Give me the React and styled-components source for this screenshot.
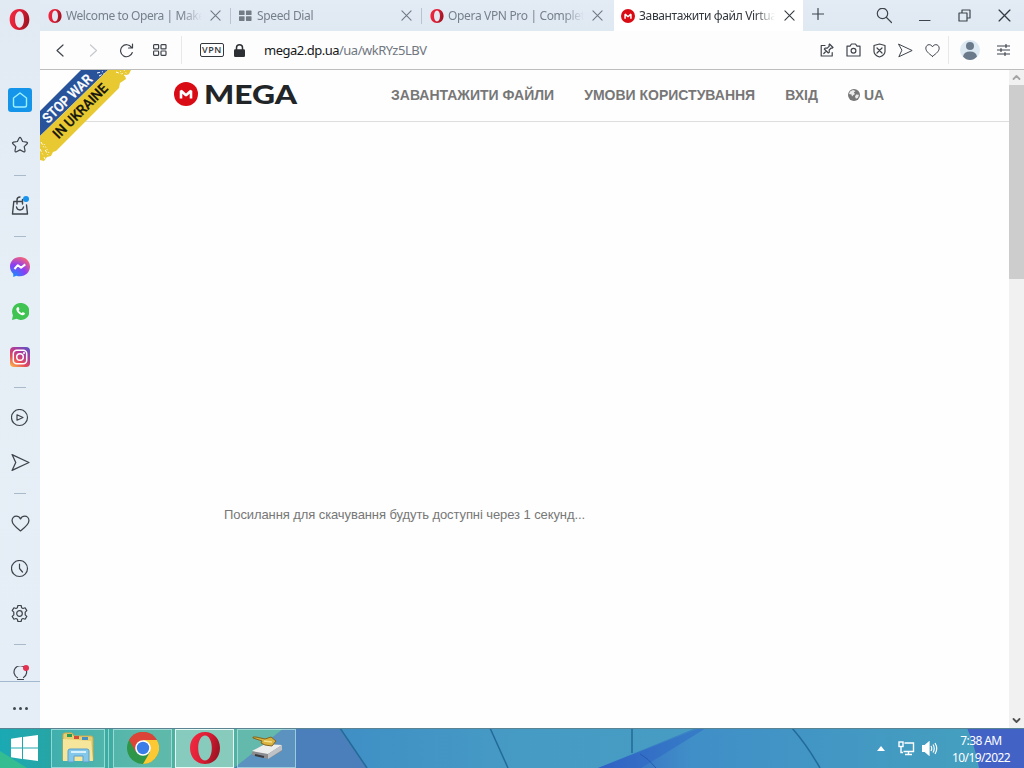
import styled, { createGlobalStyle, css } from "styled-components";

const GlobalStyle = createGlobalStyle`
  *{
    box-sizing: border-box;
  }
  body{
    margin: 0;
    width: 1024px;
    height: 768px;
    overflow: hidden;
    background: #fefefe;
    font-family: "Noto Sans", "Open Sans", sans-serif;
  }
  svg{
    display: block;
    flex: none;
  }
`;

const Line = ({ w = 16, h, box, sw = 1.2, color = "#3f444b", children }) => (
  <svg
    width={w}
    height={h || w}
    viewBox={box || `0 0 ${w} ${h || w}`}
    fill="none"
    stroke={color}
    strokeWidth={sw}
    strokeLinecap="round"
    strokeLinejoin="round"
  >
    {children}
  </svg>
);

const OperaLogo = ({ size, id }) => (
  <svg width={size} height={size} viewBox="0 0 32 32">
    <defs>
      <linearGradient id={id} x1="0" y1="0" x2="1" y2=".3">
        <stop offset="0" stopColor="#f22c42" />
        <stop offset=".6" stopColor="#dc1c34" />
        <stop offset="1" stopColor="#a31524" />
      </linearGradient>
    </defs>
    <path
      fill={`url(#${id})`}
      fillRule="evenodd"
      d="M16 0C7 0 1 7 1 16s6 16 15 16 15-7 15-16S25 0 16 0Zm0 3.500c4 0 6.800 5.500 6.800 12.500S20 28.500 16 28.500 9.200 23 9.200 16 12 3.500 16 3.500Z"
    />
  </svg>
);

const MegaMark = ({ size }) => (
  <svg width={size} height={size} viewBox="0 0 24 24">
    <circle cx="12" cy="12" r="12" fill="#d90b14" />
    <path d="M7 16.500V8.800L12 13.200l5-4.400v7.700" fill="none" stroke="#fff" strokeWidth="2.600" strokeLinejoin="bevel" />
  </svg>
);

const Cross = ({ w = 10, color = "#6f7a86" }) => (
  <Line w={w} color={color} box="0 0 12 12"><path d="M1 1l10 10M11 1L1 11" /></Line>
);

const Send = ({ w }) => (
  <Line w={w} box="0 0 18 18"><path d="M1 1.500L17 9 1 16.500 4.500 9z" /></Line>
);

const Heart = ({ w }) => (
  <Line w={w} box="0 0 18 18"><path d="M9 16C4 12.300 1 9.700 1 6.200 1 3.700 2.800 2 5 2c1.700 0 3.200 1 4 2.600C9.800 3 11.300 2 13 2c2.200 0 4 1.700 4 4.200 0 3.500-3 6.100-8 9.800z" /></Line>
);

const SpeedDialIcon = () => (
  <svg width="13" height="12" viewBox="0 0 14 12" fill="#737b84">
    <rect width="6" height="5" rx=".6" /><rect x="7.500" width="6" height="5" rx=".6" />
    <rect y="6.300" width="6" height="5" rx=".6" /><rect x="7.500" y="6.300" width="6" height="5" rx=".6" />
  </svg>
);

const Messenger = () => (
  <svg width="20" height="20" viewBox="0 0 20 20">
    <defs>
      <radialGradient id="msg" cx=".2" cy="1" r="1.100">
        <stop offset="0" stopColor="#1292ff" />
        <stop offset=".55" stopColor="#8a3df5" />
        <stop offset="1" stopColor="#fb6474" />
      </radialGradient>
    </defs>
    <path fill="url(#msg)" d="M10 0C4.300 0 0 4.100 0 9.600c0 3 1.200 5.400 3.200 7.200l.1 3.200 3-1.300c1.100.4 2.400.6 3.700.6 5.700 0 10-4.200 10-9.700S15.700 0 10 0z" />
    <path fill="none" stroke="#fff" strokeWidth="2" strokeLinejoin="round" d="M4.500 12l3.300-3.800 3.300 2.600L15.300 7.400" />
  </svg>
);

const WhatsApp = () => (
  <svg width="17" height="17" viewBox="0 0 18 18">
    <path fill="#3fc351" d="M9 0a9 9 0 0 0-8 13L0 18l5-1.200A9 9 0 1 0 9 0z" />
    <path fill="#fff" d="M5.800 4.500c.5-.4 1-.3 1.300.2l.8 1.700c0 .5-.5.900-.8 1.300.6 1.300 1.700 2.400 3.100 3 .5-.4.900-1.200 1.500-1l1.800.9c.4.300.1 1.300-.3 1.700-.8.800-2 1-3.200.5C7 11.700 5.100 9.600 4.600 7c-.2-1 .4-2 1.200-2.500z" />
  </svg>
);

const Instagram = () => (
  <svg width="20" height="20" viewBox="0 0 20 20">
    <defs>
      <linearGradient id="ig" x1=".1" y1="1" x2=".8" y2="0">
        <stop offset="0" stopColor="#fdb44b" />
        <stop offset=".35" stopColor="#e54a58" />
        <stop offset=".65" stopColor="#b53a95" />
        <stop offset="1" stopColor="#6550c0" />
      </linearGradient>
    </defs>
    <rect width="20" height="20" rx="4" fill="url(#ig)" />
    <g fill="none" stroke="#fff" strokeWidth="1.500">
      <rect x="3.300" y="3.300" width="13.400" height="13.400" rx="3.500" />
      <circle cx="10" cy="10" r="3.300" />
    </g>
    <circle cx="14" cy="6" r="1" fill="#fff" />
  </svg>
);

const sidebar = [
  { id: "home", icon: <Line w={16} color="#9df0ff" sw={1.400}><path d="M1.500 6L8 1l6.500 5v7.200q0 1.800-1.800 1.800H3.300q-1.800 0-1.800-1.800z" /></Line>, active: true },
  { id: "star", icon: <Line w={18}><path d="M8 2.200q1-1.700 2 0l1.600 3.300 3.900.6q1.700.4.600 1.700l-2.900 2.800.8 4q.1 1.700-1.500 1.100L9 13.900l-3.500 1.800q-1.600.6-1.500-1.100l.8-4L1.900 7.800Q.8 6.500 2.500 6.100l3.900-.6z" /></Line> },
  { id: "d1" },
  { id: "bag", icon: <Line w={18} h={19} sw={1.400}><path d="M10.500 5.500H2.800L1.500 18h15L15.500 9M6 8V4q0-3 3-3M11.500 3.500V8M5.500 11q.5 3 3.500 3t3.500-3" /></Line>, dot: "#1693ee" },
  { id: "d2" },
  { id: "messenger", icon: <Messenger /> },
  { id: "whatsapp", icon: <WhatsApp /> },
  { id: "instagram", icon: <Instagram /> },
  { id: "d3" },
  { id: "player", icon: <Line w={18}><circle cx="8.500" cy="8.500" r="8" /><path d="M6 5.800l6 2.700-6 2.700z" /></Line> },
  { id: "flow", icon: <Send w={19} /> },
  { id: "d4" },
  { id: "heart", icon: <Heart w={19} /> },
  { id: "history", icon: <Line w={18}><circle cx="8.500" cy="8.500" r="8" /><path d="M8.500 4v4.500l3 3.500" /></Line> },
  { id: "settings", icon: <Line w={18} box=".5 .5 18 18"><circle cx="9" cy="9" r="2.800" /><path d="M7.400 1h3.200l.5 2.200 1.400.8 2.100-.7 1.700 2.800-1.600 1.500v2.800l1.600 1.500-1.700 2.800-2.100-.7-1.400.8-.5 2.200H7.400l-.5-2.200-1.400-.8-2.100.7-1.700-2.800 1.600-1.500V7.600L1.700 6.100l1.700-2.800 2.100.7 1.400-.8z" /></Line> },
  { id: "d5" },
  { id: "tips", icon: <Line w={16} h={18} box="0 1 16 18"><path d="M5.500 12.700A6.300 6.300 0 1 1 11.500 12.500M5.500 14.500h6M7 16.500h3.500" /></Line>, dot: "#e5304f" },
];

const tabs = [
  { title: "Welcome to Opera | Make", icon: <OperaLogo size={14} id="o1" />, ls: "-.42px" },
  { title: "Speed Dial", icon: <SpeedDialIcon />, ls: "-.35px" },
  { title: "Opera VPN Pro | Complete", icon: <OperaLogo size={14} id="o2" />, ls: "-.34px" },
  { title: "Завантажити файл Virtual", icon: <MegaMark size={14} />, ls: "-.36px", active: true },
];

const Wallpaper = () => (
  <svg width="1024" height="40" viewBox="0 0 1024 40" preserveAspectRatio="none">
    <defs>
      <linearGradient id="sky">
        <stop offset="0" stopColor="#1aa9b4" />
        <stop offset=".05" stopColor="#27a5a5" />
        <stop offset=".14" stopColor="#4bb1a1" />
        <stop offset=".24" stopColor="#53b1a3" />
      </linearGradient>
      <linearGradient id="mid">
        <stop offset="0" stopColor="#3f8fc5" />
        <stop offset=".5" stopColor="#469bc4" />
        <stop offset="1" stopColor="#479cc4" />
      </linearGradient>
      <linearGradient id="right">
        <stop offset="0" stopColor="#3566c4" />
        <stop offset=".22" stopColor="#408fc8" />
        <stop offset="1" stopColor="#45a2bd" />
      </linearGradient>
    </defs>
    <rect width="1024" height="40" fill="url(#sky)" />
    <path d="M0 23l27 17H0z" fill="#35bd92" />
    <path d="M284 0h60l25 40H234z" fill="#4a7fbb" />
    <path d="M340 0h360l-98 40H367z" fill="url(#mid)" />
    <path d="M598 40L700 0h324v40z" fill="url(#right)" />
    <path d="M598 40L696 0h10q-35 22-65 40z" fill="#285dc5" opacity=".4" />
    <path d="M967 0q8 18 12 40h45V0z" fill="#4262c6" />
    <g fill="none" stroke="#236a98" strokeWidth="1.500">
      <path d="M340 0l27 40M490 0l18 40M632 0v25M792 0q15 17 28 40" />
      <path d="M640 26q8 4 16 14" stroke="#265bb0" strokeWidth="1" />
    </g>
    <path d="M0 .5h1024" stroke="#5b8391" />
  </svg>
);

const ExplorerIcon = () => (
  <svg width="34" height="32" viewBox="0 0 34 32">
    <path d="M2 3q0-2 2-2h7l2 3h17q2 0 2 2v22H2z" fill="#e9cf71" stroke="#c9a94b" />
    <path d="M6 2h5v3H6z" fill="#2a9b54" /><path d="M13 4h5v3h-5z" fill="#d24d38" /><path d="M21 5h6v3h-6z" fill="#478ec2" />
    <path d="M2 7l28 2 2 20H2z" fill="#f6e69b" />
    <path d="M7 30V19q0-2 2-2h17q2 0 2 2v11h-6v-6h-9v6z" fill="#83c8eb" stroke="#5a9fcb" />
    <path d="M10 20h15" stroke="#d7f1fc" strokeWidth="2" />
  </svg>
);

const ChromeIcon = () => (
  <svg width="32" height="32" viewBox="0 0 32 32">
    <circle cx="16" cy="16" r="16" fill="#2d9648" />
    <path d="M16 16L2.100 8A16 16 0 0 1 29.900 8z" fill="#dc4437" />
    <path d="M16 8h13.900A16 16 0 0 1 16 32l7-12z" fill="#fcc934" />
    <path d="M2.100 8L9 20l7-12z" fill="#dc4437" />
    <circle cx="16" cy="16" r="7.800" fill="#fff" />
    <circle cx="16" cy="16" r="6.200" fill="#3a7de8" />
  </svg>
);

const DriveIcon = () => (
  <svg width="32" height="26" viewBox="0 0 32 26">
    <path d="M1 17l12-8 18 1v6l-14 8-16-4z" fill="#8a8c90" />
    <path d="M1 16l13-7 17 1-14 9z" fill="#eceeee" />
    <path d="M17 19l14-9v5l-14 9z" fill="#bec2c6" />
    <path d="M2 2h3l9 2 6-2 5 4-4 5-7-1-4-2 1-2-9-3z" fill="#d9b33f" stroke="#86651d" />
    <path d="M13 6l8 1" stroke="#f4df8b" strokeWidth="1.500" />
    <path d="M4 20l9 2" stroke="#383b40" strokeWidth="2" />
  </svg>
);

const Ribbon = () => (
  <svg width="92" height="92" viewBox="0 0 92 92" fontFamily="Roboto, sans-serif" fontWeight="500" fontSize="14">
    <path d="M41 0h27L0 66V41z" fill="#28539b" />
    <path d="M68 0h23l-2 4-4 2 1 3-6 4-1 5L16 81l-3 1-2 4-4 1-3 4-4-1V66z" fill="#e8c932" />
    <g stroke="#fff" strokeWidth="1" strokeDasharray="3 2 1 3">
      <path d="M57 3l9-2M59 6l8-4M76 2l14 5M1 72l7 13M0 79l5 10" />
      <path d="M80 1l8 8M84 0l5 7M4 74l5 9" strokeDasharray="1 2" />
    </g>
    <text transform="translate(8 54) rotate(-44)" textLength="63" lengthAdjust="spacingAndGlyphs" fill="#fff" stroke="#fff" strokeWidth=".3">STOP WAR</text>
    <text transform="translate(18.500 69.500) rotate(-45)" textLength="71" lengthAdjust="spacingAndGlyphs" fill="#15150f" stroke="#15150f" strokeWidth=".3">IN UKRAINE</text>
  </svg>
);

const App = () => {
  return (
    <Desktop>
      <GlobalStyle />
      <Browser>
        <Sidebar>
          <OperaMenu><OperaLogo size={21} id="o0" /></OperaMenu>
          <SideList>
            {sidebar.map(({ id, icon, active, dot }) =>
              icon ? (
                <SideItem key={id}>
                  <SideIcon $active={active}>
                    {icon}
                    {dot && <Dot $color={dot} />}
                  </SideIcon>
                </SideItem>
              ) : (
                <SideDivider key={id} />
              )
            )}
          </SideList>
          <SideMore><i /><i /><i /></SideMore>
        </Sidebar>
        <Main>
          <TabBar>
            {tabs.map(({ title, icon, active, ls }) => (
              <Tab key={title} $active={active}>
                <TabIcon>{icon}</TabIcon>
                <TabTitle $ls={ls}>{title}</TabTitle>
                <Cross w={11} color={active ? "#343a42" : undefined} />
              </Tab>
            ))}
            <NewTab><Line w={12}><path d="M6 .5v11M.5 6h11" /></Line></NewTab>
            <WindowButtons>
              <Line w={16}><circle cx="6.500" cy="5.500" r="5.200" /><path d="M10.500 9.500l5 5" /></Line>
              <Line w={12} h={16}><path d="M0 12.500h11" /></Line>
              <Line w={13}><path d="M1 4h8v8H1zM4 4V1h8v8H9" /></Line>
              <Cross w={13} color="#343a42" />
            </WindowButtons>
          </TabBar>
          <Toolbar>
            <NavButtons>
              <Line w={9} h={13}><path d="M7 1L1 6.500l6 5.500" /></Line>
              <Line w={9} h={13} color="#c6c9cd"><path d="M1.500 1l6 5.500-6 5.500" /></Line>
              <Line w={15}><path d="M13.300 9.500A6 6 0 1 1 12.500 4.300M13.500 1v4h-4" /></Line>
              <Line w={14} h={12}><rect x=".6" y=".6" width="5" height="4.300" rx=".7" /><rect x="8" y=".6" width="5" height="4.300" rx=".7" /><rect x=".6" y="7" width="5" height="4.300" rx=".7" /><rect x="8" y="7" width="5" height="4.300" rx=".7" /></Line>
            </NavButtons>
            <Separator />
            <Vpn>VPN</Vpn>
            <svg width="11" height="13" viewBox="0 0 11 13"><path d="M2.500 6V3.800a3 3 0 0 1 6 0V6" fill="none" stroke="#2c2f33" strokeWidth="1.500" /><rect y="5.300" width="11" height="7.700" rx="1.200" fill="#2c2f33" /></svg>
            <Address>mega2.dp.ua<span>/ua/wkRYz5LBV</span></Address>
            <Actions>
              <Line w={14}><path d="M5 2.500H1.200V13h11V9.500M9.500 1l3.500 3.500-1 .7-.8-.2-2 2 .1 2.300-1 .7-4-4 .8-1 2.200.1 2-2-.3-1zM6.300 8l-2.500 2.500" /></Line>
              <Line w={15} h={14}><path d="M1 3.200h3L5.500 1h4L11 3.200h3V13H1z" /><circle cx="7.500" cy="7.800" r="2.400" /></Line>
              <Line w={13} h={15}><path d="M6.500 1l5.500 1.500v6q0 3.500-5.500 5.500Q1 12 1 8.500v-6zM4 5l5 5M9 5l-5 5" /></Line>
              <Send w={15} />
              <Heart w={15} />
            </Actions>
            <Separator />
            <Avatar>
              <svg width="20" height="20" viewBox="0 0 20 20">
                <circle cx="10" cy="10" r="10" fill="#dce9f2" />
                <circle cx="10" cy="6" r="4" fill="#6a7a8b" />
                <path d="M3 16.500Q4 11.500 10 11.500t7 5Q14 20 10 20t-7-3.500z" fill="#6a7a8b" />
              </svg>
            </Avatar>
            <Line w={13} h={12}><path d="M.5 2h12M.5 6h12M.5 10h12M9 .5v3M4 4.500v3M8 8.500v3" /></Line>
          </Toolbar>
          <Viewport>
            <Page>
              <RibbonLink><Ribbon /></RibbonLink>
              <Header>
                <MegaMark size={24} />
                <svg width="96" height="26" viewBox="0 0 96 26">
                  <text x="0" y="22.500" fontFamily="Lato, sans-serif" fontWeight="900" fontSize="27" textLength="93" lengthAdjust="spacingAndGlyphs" fill="#222527">MEGA</text>
                </svg>
                <Menu>
                  <MenuItem>ЗАВАНТАЖИТИ ФАЙЛИ</MenuItem>
                  <MenuItem>УМОВИ КОРИСТУВАННЯ</MenuItem>
                  <MenuItem>ВХІД</MenuItem>
                  <MenuItem>
                    <svg width="12" height="12" viewBox="0 0 12 12">
                      <circle cx="6" cy="6" r="6" fill="#777" />
                      <path d="M5 1L2 2.500 1 5l2.500.5.500 2L5.500 6 7 5 5.800 3.500 7.500 2zM8 5.500l3 .3-1 3-2 1-1-2z" fill="#fff" opacity=".85" />
                    </svg>
                    UA
                  </MenuItem>
                </Menu>
              </Header>
              <Countdown>Посилання для скачування будуть доступні через 1 секунд...</Countdown>
            </Page>
            <Scrollbar>
              <Line w={9} h={15} box="0 0 9 15" color="#a5a5a5" sw={1.800}><path d="M1.500 9L4.500 6l3 3" /></Line>
              <Thumb />
              <Line w={9} h={15} box="0 0 9 15" color="#505050" sw={1.800}><path d="M1.500 6l3 3 3-3" /></Line>
            </Scrollbar>
          </Viewport>
        </Main>
      </Browser>
      <Taskbar>
        <TaskbarBack><Wallpaper /></TaskbarBack>
        <Start>
          <svg width="27" height="26" viewBox="0 0 27 26" fill="#fff"><path d="M0 3.700L11 2v10.400H0zM12 1.900L27 0v12.400H12zM0 13.400h11V24L0 22.300zM12 13.400h15V26l-15-2z" /></svg>
        </Start>
        <Task $width={54}><ExplorerIcon /></Task>
        <TaskStack />
        <Task $width={59}><ChromeIcon /></Task>
        <Task $width={59} $active><OperaLogo size={32} id="o3" /></Task>
        <Task $width={59}><DriveIcon /></Task>
        <Tray>
          <svg width="8" height="5" viewBox="0 0 8 5"><path d="M0 5l4-5 4 5z" fill="#fff" /></svg>
          <svg width="17" height="15" viewBox="0 0 17 15" fill="none" stroke="#fff" strokeWidth="1.400">
            <path d="M6.500 2H15.500v8.500H5.500M7 13.500h7M10.500 10.500v3M3 6v5.500h2" />
            <rect x="1" y="1" width="4" height="4.500" />
          </svg>
          <svg width="16" height="15" viewBox="0 0 16 15" fill="none" stroke="#fff" strokeWidth="1.200">
            <path d="M.5 4.500H3L7 1v13l-4-3.500H.5z" fill="#fff" />
            <path d="M9 5q1.500 2.500 0 5M11 3.500q2.500 4 0 8M13 2q3.500 5.500 0 11" />
          </svg>
          <Clock><span>7:38 AM</span><span>10/19/2022</span></Clock>
        </Tray>
      </Taskbar>
    </Desktop>
  );
};

export default App;

const Desktop = styled.div`
  width: 1024px;
  height: 768px;
  display: flex;
  flex-direction: column;
  overflow: hidden;
`;

const Browser = styled.div`
  display: flex;
  height: 728px;
`;

const Sidebar = styled.aside`
  width: 40px;
  display: flex;
  flex-direction: column;
  background: linear-gradient(#e1e9f3, #e6eef6 40%, #e5edf6);
`;

const OperaMenu = styled.div`
  height: 77px;
  padding: 9px 0 0 9px;
`;

const SideList = styled.div`
  height: 605px;
  overflow: hidden;
  border-bottom: 1px solid #a3b9cf;
`;

const SideItem = styled.div`
  height: 45px;
  display: flex;
  align-items: center;
  justify-content: center;
`;

const SideIcon = styled.div`
  position: relative;
  width: 24px;
  height: 24px;
  display: flex;
  align-items: center;
  justify-content: center;
  border-radius: 3px;
  background: ${({ $active }) => ($active ? "#1495ea" : "transparent")};
`;

const Dot = styled.span`
  position: absolute;
  top: 2px;
  right: 3px;
  width: 6px;
  height: 6px;
  border-radius: 50%;
  background: ${({ $color }) => $color};
`;

const SideDivider = styled.div`
  height: 16px;
  display: flex;
  align-items: center;
  justify-content: center;
  &::after{
    content: "";
    width: 12px;
    height: 1px;
    background: #a9bacb;
  }
`;

const SideMore = styled.div`
  flex: 1;
  display: flex;
  align-items: center;
  justify-content: center;
  gap: 3px;
  margin-top: 6px;
  i{
    width: 3px;
    height: 3px;
    border-radius: 50%;
    background: #42484f;
  }
`;

const Main = styled.main`
  flex: 1;
  display: flex;
  flex-direction: column;
`;

const TabBar = styled.div`
  height: 31px;
  display: flex;
  background: linear-gradient(#e3ebf5, #dfe9f2);
`;

const Tab = styled.div`
  width: 191px;
  padding: 0 10px 0 8px;
  display: flex;
  align-items: center;
  color: #75808c;
  background-image: linear-gradient(#b9c4d0, #b9c4d0);
  background-size: 1px 16px;
  background-position: right 8px;
  background-repeat: no-repeat;
  &:nth-child(3){
    background: none;
  }
  ${({ $active }) => $active && css`
    width: 189px;
    margin-left: 1px;
    padding: 0 8px 0 7px;
    color: #33383e;
    background: #fff;
  `}
`;

const TabIcon = styled.span`
  width: 18px;
  flex: none;
`;

const TabTitle = styled.span`
  width: 136px;
  margin-right: auto;
  overflow: hidden;
  white-space: nowrap;
  font-size: 12px;
  line-height: 18px;
  letter-spacing: ${({ $ls }) => $ls};
  mask-image: linear-gradient(90deg, #000 85%, transparent);
`;

const NewTab = styled.div`
  padding: 8px 9px;
`;

const WindowButtons = styled.div`
  margin-left: auto;
  margin-right: 13px;
  display: flex;
  align-items: center;
  gap: 27px;
`;

const Toolbar = styled.div`
  height: 39px;
  display: flex;
  align-items: center;
  padding: 0 14px 0 16px;
  background: #fdfdfe;
  border-bottom: 1px solid #bdbdbd;
`;

const NavButtons = styled.div`
  display: flex;
  align-items: center;
  width: 125px;
  gap: 24px;
  & > svg:nth-child(3){
    margin-left: -3px;
  }
  & > svg:nth-child(4){
    margin-left: -5px;
  }
`;

const Separator = styled.div`
  width: 1px;
  height: 28px;
  background: #e6e8ea;
`;

const Vpn = styled.div`
  width: 24px;
  height: 14px;
  margin: 0 10px 0 18px;
  border: 1px solid #33373c;
  border-radius: 2px;
  font: 600 9px/12px "Open Sans", sans-serif;
  letter-spacing: .6px;
  text-align: center;
  color: #33373c;
`;

const Address = styled.div`
  margin-left: 19px;
  font-size: 13px;
  letter-spacing: -.5px;
  color: #16181a;
  span{
    color: #70777f;
  }
`;

const Actions = styled.div`
  margin-left: auto;
  margin-right: 8px;
  display: flex;
  align-items: center;
  gap: 12px;
`;

const Avatar = styled.div`
  margin: 0 17px 0 11px;
`;

const Viewport = styled.div`
  flex: 1;
  display: flex;
`;

const Page = styled.section`
  position: relative;
  flex: 1;
  background: #fefefe;
  font-family: "Liberation Sans", Arial, sans-serif;
`;

const RibbonLink = styled.div`
  position: absolute;
  top: 0;
  left: 0;
`;

const Header = styled.header`
  height: 52px;
  padding-left: 134px;
  padding-bottom: 3px;
  display: flex;
  align-items: center;
  border-bottom: 1px solid #dedede;
  & > svg + svg{
    margin-left: 6px;
  }
`;

const Menu = styled.nav`
  margin-left: 91px;
  padding-top: 2px;
  display: flex;
  gap: 30px;
`;

const MenuItem = styled.a`
  display: flex;
  align-items: center;
  gap: 4px;
  font-size: 14px;
  font-weight: bold;
  color: #777;
`;

const Countdown = styled.p`
  margin: 384px 0 0 184px;
  font-size: 13px;
  line-height: 18px;
  letter-spacing: -.09px;
  color: #777;
`;

const Scrollbar = styled.div`
  width: 15px;
  display: flex;
  flex-direction: column;
  align-items: center;
  background: #f1f1f1;
`;

const Thumb = styled.div`
  width: 15px;
  height: 194px;
  margin-bottom: auto;
  background: #cdcdcd;
`;

const Taskbar = styled.footer`
  position: relative;
  height: 40px;
  display: flex;
  align-items: center;
`;

const TaskbarBack = styled.div`
  position: absolute;
  inset: 0;
  z-index: -1;
`;

const Start = styled.div`
  width: 51px;
  padding-left: 11px;
`;

const Task = styled.div`
  width: ${({ $width }) => $width}px;
  height: 39px;
  margin-right: 3px;
  display: flex;
  align-items: center;
  justify-content: center;
  border: 1px solid ${({ $active }) => ($active ? "#e5faf5" : "rgba(190, 235, 235, .65)")};
  background: ${({ $active }) => ($active ? "rgba(190, 230, 215, .5)" : "rgba(155, 215, 205, .22)")};
`;

const TaskStack = styled.div`
  width: 3px;
  height: 39px;
  margin: 0 4px 0 -2px;
  border-right: 1px solid rgba(190, 235, 235, .65);
`;

const Tray = styled.div`
  margin-left: auto;
  padding-right: 13px;
  display: flex;
  align-items: center;
  & > svg:nth-child(2){
    margin: 0 7px 0 13px;
  }
`;

const Clock = styled.div`
  width: 60px;
  margin-left: 13px;
  padding-top: 2px;
  display: flex;
  flex-direction: column;
  align-items: center;
  font-size: 12px;
  line-height: 17px;
  letter-spacing: -.6px;
  white-space: nowrap;
  color: #fff;
`;
